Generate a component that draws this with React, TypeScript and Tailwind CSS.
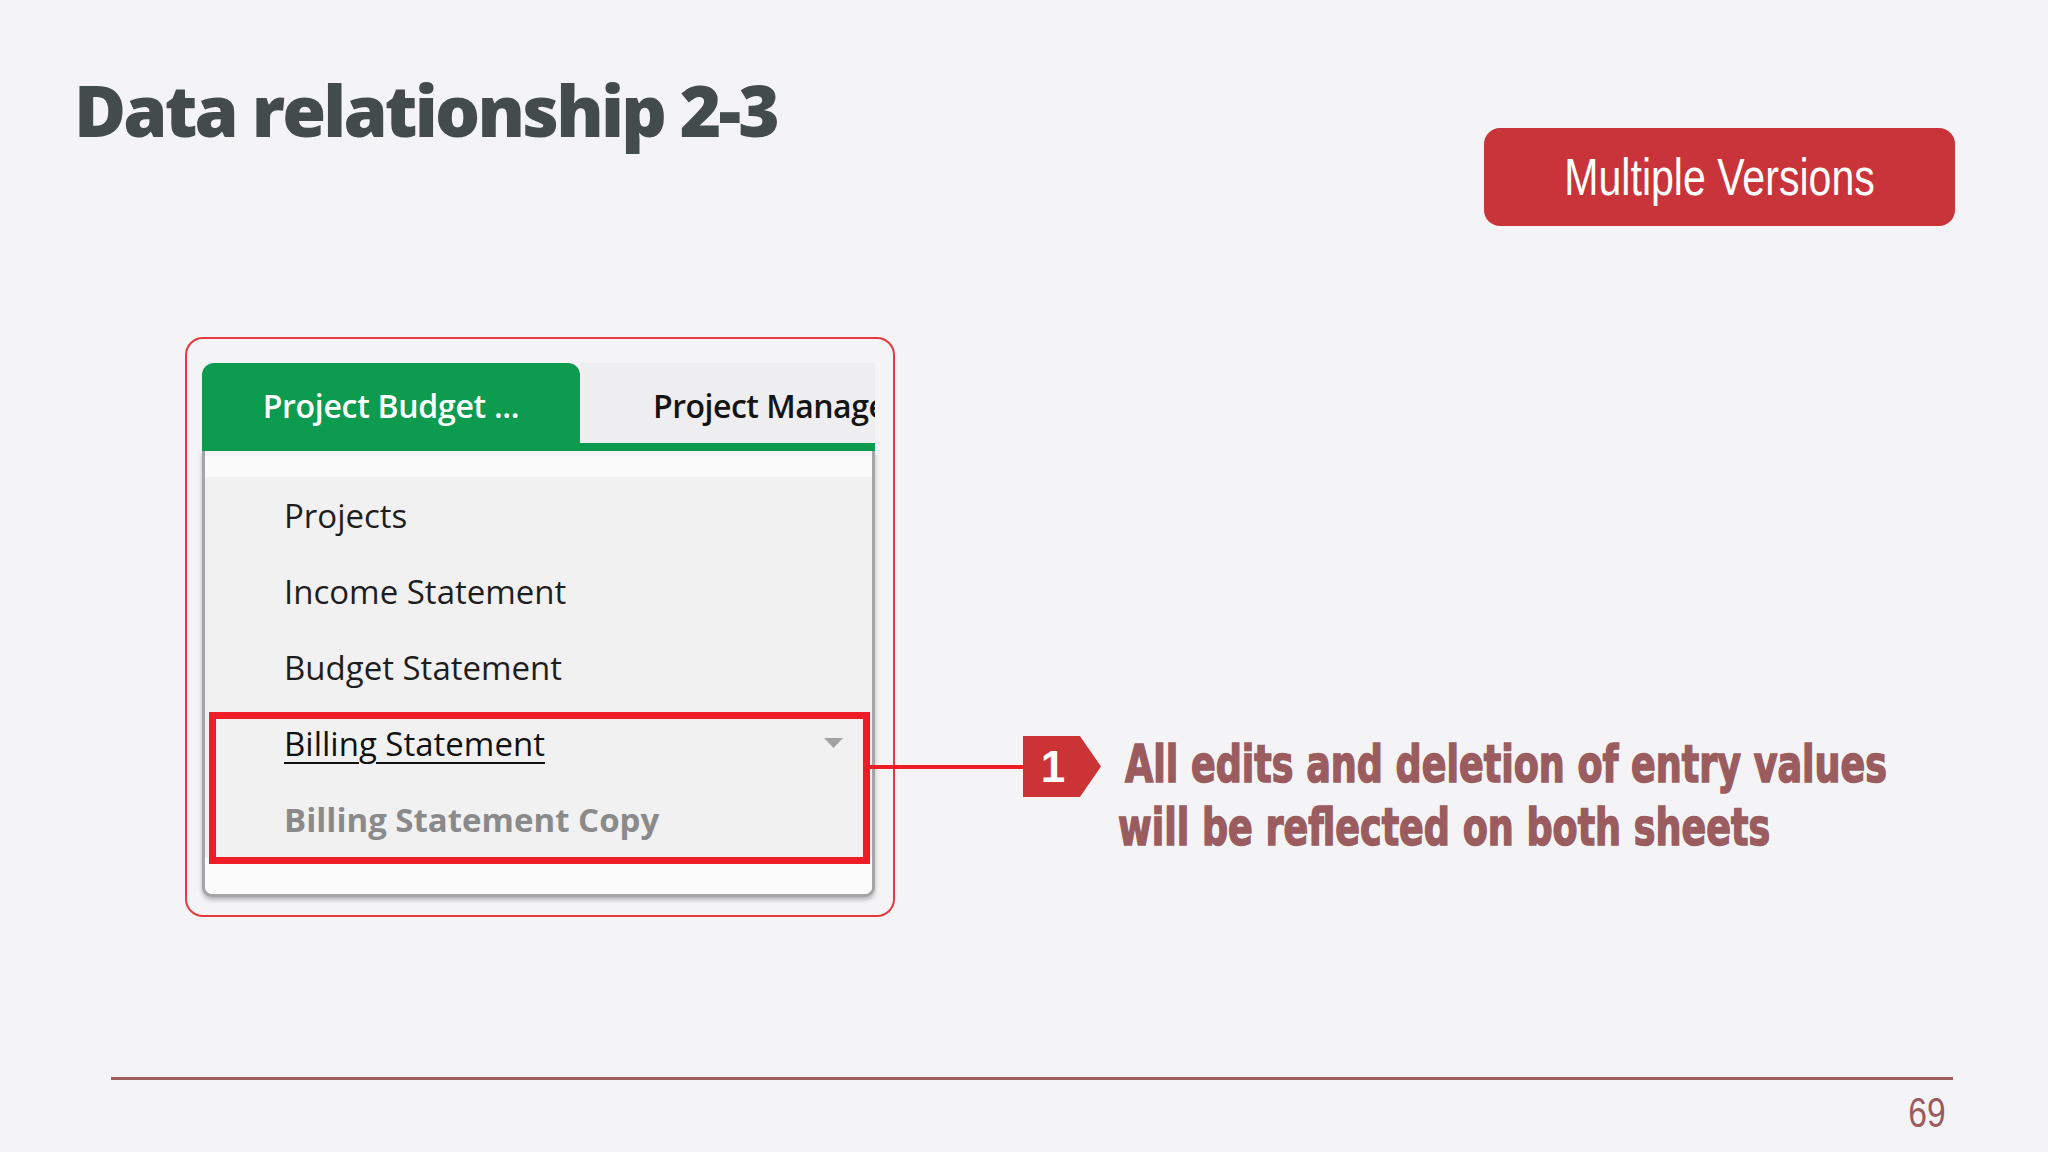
export default function App() {
  const rows = ["Projects", "Income Statement", "Budget Statement"];
  return (
    <div className="relative flex h-[1152px] w-[2048px] flex-col overflow-hidden bg-[#f4f4f6]">
      <header className="flex h-[337px] shrink-0 items-start justify-between pl-[74px] pr-[93px] pt-[74px]">
        <h1 className="whitespace-nowrap font-['Open_Sans',sans-serif] text-[71px] font-extrabold leading-none tracking-[-2.8px] text-[#434c4b]">
          Data relationship 2-3
        </h1>
        <div className="mt-[54px] flex h-[98px] w-[471px] items-center justify-center rounded-[16px] bg-[#c9343a]">
          <span className="scale-x-[0.79] whitespace-nowrap font-['Liberation_Sans',Arial,sans-serif] text-[52px] leading-none text-white">
            Multiple Versions
          </span>
        </div>
      </header>

      <section className="relative flex h-[580px] shrink-0 items-start">
        <div className="ml-[185px] h-[580px] w-[710px] rounded-[18px] border-[2.5px] border-[#e23a3e] pl-[15px] pr-[18px] pt-[24px] font-['Open_Sans',sans-serif]">
          <div className="flex h-[88px] border-b-[8px] border-[#0d9b50]">
            <div className="flex h-[80px] w-[378px] shrink-0 items-center justify-center rounded-t-[12px] bg-[#0d9b50] pt-[6px] text-[32px] font-semibold leading-none tracking-[-0.3px] text-white">
              Project Budget ...
            </div>
            <div className="flex h-[80px] flex-1 items-center overflow-hidden whitespace-nowrap bg-[#eeeef0] pl-[73px] pt-[6px] text-[32px] font-semibold leading-none tracking-[-0.5px] text-[#141414]">
              Project Management
            </div>
          </div>
          <div className="rounded-b-[10px] border-x-[3px] border-b-[3px] border-[#a5a5a5] bg-[#fbfbfb] shadow-[0_3px_4px_rgba(0,0,0,0.25)]">
            <div className="h-[26px] border-t-[5px] border-[#f4f4f6] bg-[#fafafa]" />
            <div className="relative bg-[#f1f1f2]">
              {rows.map((r) => (
                <div key={r} className="flex h-[76px] items-center pl-[79px] text-[33px] leading-none text-[#1e1e1e]">
                  {r}
                </div>
              ))}
              <div className="flex h-[76px] items-center justify-between pl-[79px] pr-[29px] text-[33px] leading-none text-[#111]">
                <span className="underline decoration-2 underline-offset-[6px]">Billing Statement</span>
                <svg width="19" height="10" viewBox="0 0 19 10">
                  <polygon points="0,0 19,0 9.5,10" fill="#a3a3a3" />
                </svg>
              </div>
              <div className="flex h-[76px] items-center pl-[79px] text-[33px] font-bold leading-none text-[#8a8a8a]">
                Billing Statement Copy
              </div>
              <div className="pointer-events-none absolute left-[4px] top-[235px] h-[152px] w-[661px] border-[7px] border-[#ee1c25]" />
            </div>
            <div className="h-[37px] rounded-b-[8px] bg-[#fbfbfb]" />
          </div>
        </div>

        <div className="pointer-events-none absolute left-[863px] top-[428px] h-[4px] w-[162px] bg-[#ee1c25]" />

        <div className="ml-[128px] mt-[399px] flex items-start">
          <div className="flex h-[61px] w-[78px] shrink-0 items-center bg-[#cc3337] [clip-path:polygon(0_0,73%_0,100%_50%,73%_100%,0_100%)]">
            <span className="w-[60px] text-center font-['Liberation_Sans',Arial,sans-serif] text-[44px] font-bold leading-none text-white">
              1
            </span>
          </div>
          <div className="-mt-[3px] ml-[24px] font-['DejaVu_Sans_Condensed','DejaVu_Sans',sans-serif] text-[52px] font-bold leading-[63px] text-[#9a5c5e] font-stretch-condensed [-webkit-text-stroke:1.5px_#9a5c5e]">
            <div className="origin-left scale-x-[0.78] whitespace-nowrap">All edits and deletion of entry values</div>
            <div className="-ml-[7px] origin-left scale-x-[0.78] whitespace-nowrap">will be reflected on both sheets</div>
          </div>
        </div>
      </section>

      <footer className="mt-[160px] shrink-0">
        <div className="ml-[111px] h-[3px] w-[1842px] bg-[#9a5c5e]" />
        <div className="mt-[12px] flex justify-end pr-[102px]">
          <span className="origin-right scale-x-[0.8] font-['Liberation_Sans',Arial,sans-serif] text-[42px] leading-none text-[#9a5c5e]">
            69
          </span>
        </div>
      </footer>
    </div>
  );
}
